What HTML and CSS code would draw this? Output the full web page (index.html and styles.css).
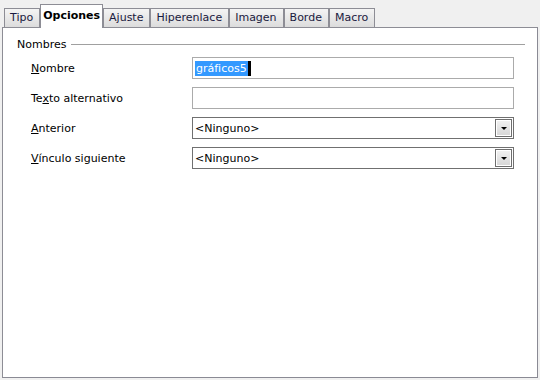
FILE: index.html
```html
<!DOCTYPE html>
<html lang="es">
<head>
    <meta charset="UTF-8">
    <title>Opciones</title>
    <link rel="stylesheet" href="styles.css">
</head>
<body>
    <div class="tabs">
        <div class="tab">Tipo</div>
        <div class="tab active">Opciones</div>
        <div class="tab">Ajuste</div>
        <div class="tab">Hiperenlace</div>
        <div class="tab">Imagen</div>
        <div class="tab">Borde</div>
        <div class="tab">Macro</div>
    </div>
    <div class="panel">
        <div class="group-title">
            <span>Nombres</span>
            <div class="rule"></div>
        </div>
        <div class="row">
            <label><u>N</u>ombre</label>
            <div class="field"><span class="sel">gráficos5</span><span class="caret"></span></div>
        </div>
        <div class="row">
            <label>Te<u>x</u>to alternativo</label>
            <div class="field"></div>
        </div>
        <div class="row">
            <label><u>A</u>nterior</label>
            <div class="field combo"><span>&lt;Ninguno&gt;</span><span class="drop"><i></i></span></div>
        </div>
        <div class="row">
            <label><u>V</u>ínculo siguiente</label>
            <div class="field combo"><span>&lt;Ninguno&gt;</span><span class="drop"><i></i></span></div>
        </div>
    </div>
</body>
</html>
```
FILE: styles.css
```css
* {
    box-sizing: border-box;
}

body {
    margin: 0;
    background: #f0f0f0;
    font-family: "DejaVu Sans", sans-serif;
    font-size: 11px;
    color: #000;
    width: 540px;
    height: 380px;
    overflow: hidden;
}

.tabs {
    display: flex;
    align-items: flex-end;
    height: 28px;
    padding-left: 4px;
}

.tab {
    height: 19px;
    padding: 2px 6px 0 5px;
    border: 1px solid #8d8d95;
    border-bottom: none;
    background: linear-gradient(#f4f4f4, #dcdcdc);
    margin-bottom: 1px;
    color: #1a1a40;
}

.tab.active {
    height: 24px;
    padding: 4px 2px 0 2px;
    font-weight: bold;
    color: #000;
    background: #fff;
    margin-bottom: 0;
    position: relative;
    z-index: 1;
}

.panel {
    margin: -1px 2px 0 2px;
    height: 351px;
    background: #fff;
    border: 1px solid #8d8d95;
    border-right-color: #8a8a94;
    border-bottom-color: #8a8a94;
    padding: 10px 12px 0 14px;
}

.group-title {
    display: flex;
    align-items: center;
    gap: 5px;
    height: 13px;
    margin-bottom: 6px;
}

.rule {
    flex: 1;
    border-top: 1px solid #a0a0a0;
}

.row {
    display: flex;
    align-items: center;
    height: 22px;
    margin-bottom: 8px;
}

.row label {
    width: 175px;
    padding-left: 14px;
}

.field {
    width: 322px;
    height: 22px;
    border: 1px solid #ababab;
    background: #fff;
    display: flex;
    align-items: center;
    padding-left: 2px;
}

.sel {
    background: #3399ff;
    color: #fff;
    padding: 0 1px;
    line-height: 15px;
}

.caret {
    width: 3px;
    height: 15px;
    background: #000;
}

.combo {
    border-color: #707070;
    justify-content: space-between;
    padding-right: 1px;
}

.drop {
    width: 17px;
    height: 18px;
    border: 1px solid #6e6e6e;
    box-shadow: inset 0 0 0 1px #fff;
    background: linear-gradient(#f2f2f2, #d6d6d6);
    display: flex;
    align-items: center;
    justify-content: center;
}

.drop i {
    width: 0;
    height: 0;
    border-left: 3px solid transparent;
    border-right: 3px solid transparent;
    border-top: 3px solid #000;
}
```
